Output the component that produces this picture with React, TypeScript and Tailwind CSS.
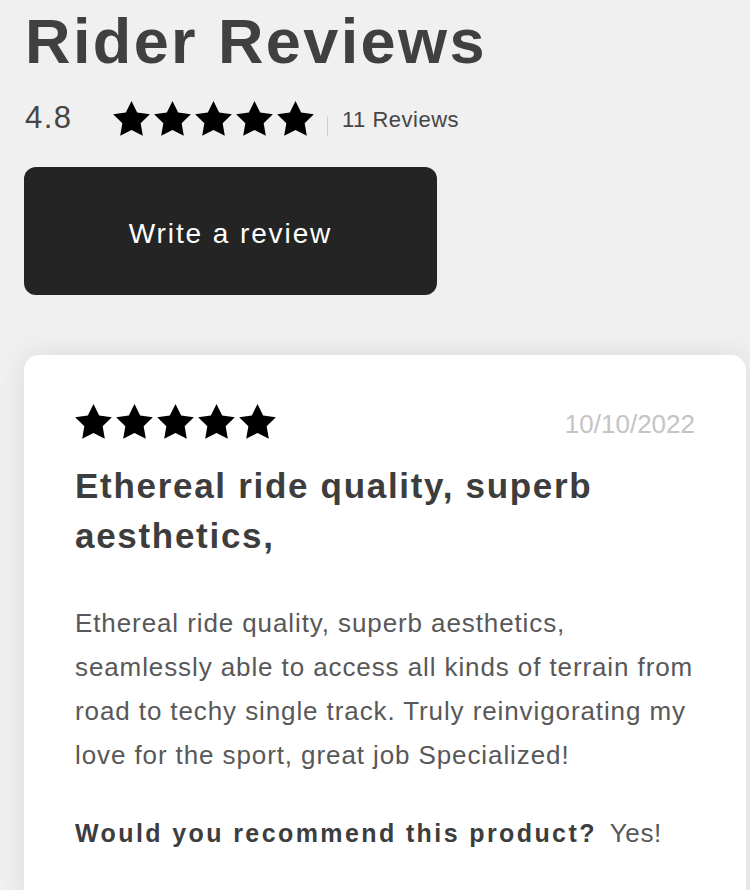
import { useState } from 'react';

type Review = {
  id: number;
  rating: number;
  date: string;
  title: string;
  body: string;
  recommend: boolean;
};

const reviews: Review[] = [
  {
    id: 1,
    rating: 5,
    date: '10/10/2022',
    title: 'Ethereal ride quality, superb aesthetics,',
    body: 'Ethereal ride quality, superb aesthetics, seamlessly able to access all kinds of terrain from road to techy single track. Truly reinvigorating my love for the sport, great job Specialized!',
    recommend: true,
  },
];

function Star({ className }: { className?: string }) {
  return (
    <svg viewBox="2 2 20 19.1" className={className} fill="currentColor">
      <path d="M12 2l3.09 6.26L22 9.27l-5 4.87 1.18 6.88L12 17.77l-6.18 3.25L7 14.14 2 9.27l6.91-1.01L12 2z" />
    </svg>
  );
}

function Stars({ count }: { count: number }) {
  return (
    <div className="flex gap-[4px] text-black">
      {Array.from({ length: count }).map((_, i) => (
        <Star key={i} className="w-[37px] h-[35px]" />
      ))}
    </div>
  );
}

export default function App() {
  const [items] = useState<Review[]>(reviews);

  return (
    <div className="min-h-screen bg-[#f0f0f0] pl-[24px] pt-[6px] font-['Liberation_Sans',Arial,sans-serif] overflow-hidden">
      <h1 className="text-[63px] leading-[70px] font-bold tracking-[2.4px] text-[#404040] pl-[1px]">
        Rider Reviews
      </h1>

      {/* rating summary */}
      <div className="mt-[22px] h-[40px] flex items-center pl-[1px]">
        <span className="text-[31px] tracking-[1.5px] text-[#454545] w-[88px]">4.8</span>
        <Stars count={5} />
        <span className="ml-[13px] mt-[16px] w-px h-[20px] bg-[#cfcfcf]" />
        <span className="ml-[14px] mt-[3px] text-[22px] tracking-[0.5px] text-[#454545]">11 Reviews</span>
      </div>

      <button className="mt-[29px] w-[413px] h-[128px] rounded-[12px] bg-[#242424] text-white text-[28px] tracking-[1.9px] flex items-center justify-center pt-[6px]">
        Write a review
      </button>

      <div className="mt-[60px] space-y-6">
        {items.map((r) => (
          <div
            key={r.id}
            className="w-[722px] bg-white rounded-[15px] shadow-[0_0_28px_rgba(0,0,0,0.09)] pt-[49px] px-[51px] pb-[60px]"
          >
            <div className="flex items-center justify-between h-[34px]">
              <Stars count={r.rating} />
              <span className="text-[26px] text-[#c4c4c4] mt-[6px]">{r.date}</span>
            </div>
            <h2 className="mt-[23px] text-[35px] leading-[50px] font-bold tracking-[1.7px] text-[#3d3d3d] pr-[60px]">
              {r.title}
            </h2>
            <p className="mt-[40px] text-[26px] leading-[44px] tracking-[0.9px] text-[#585858]">
              {r.body}
            </p>
            <p className="mt-[40px] text-[25px] leading-[32px] text-[#3d3d3d]">
              <span className="font-bold tracking-[2.4px]">Would you recommend this product?</span>
              <span className="ml-[13px] text-[#585858] tracking-[0.6px] text-[26px]">
                {r.recommend ? 'Yes!' : 'No'}
              </span>
            </p>
          </div>
        ))}
      </div>
    </div>
  );
}
